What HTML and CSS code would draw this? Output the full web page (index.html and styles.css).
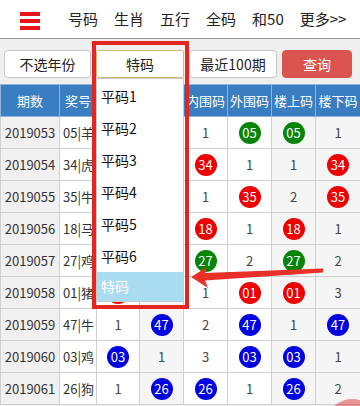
FILE: index.html
```html
<!DOCTYPE html>
<html lang="zh-CN">

<head>
    <meta charset="UTF-8">
    <meta name="viewport" content="width=device-width, initial-scale=1.0">
    <title>特码</title>
    <link rel="stylesheet" href="styles.css">
</head>

<body>
    <header class="topbar">
        <div class="menu-btn">
            <span></span>
            <span></span>
            <span></span>
        </div>
        <nav class="nav">
            <a href="#">号码</a>
            <a href="#">生肖</a>
            <a href="#">五行</a>
            <a href="#">全码</a>
            <a href="#">和50</a>
            <a href="#">更多&gt;&gt;</a>
        </nav>
    </header>

    <div class="filter">
        <button class="btn">不选年份</button>
        <div class="select-wrap">
            <div class="select">特码</div>
            <ul class="options">
                <li>平码1</li>
                <li>平码2</li>
                <li>平码3</li>
                <li>平码4</li>
                <li>平码5</li>
                <li>平码6</li>
                <li class="active">特码</li>
            </ul>
        </div>
        <button class="btn">最近100期</button>
        <button class="btn btn-query">查询</button>
    </div>

    <table class="data">
        <colgroup>
            <col style="width:59px">
            <col style="width:37px">
            <col style="width:43px">
            <col style="width:44px">
            <col style="width:44px">
            <col style="width:44px">
            <col style="width:44px">
            <col style="width:45px">
        </colgroup>
        <thead>
            <tr>
                <th>期数</th>
                <th>奖号</th>
                <th>小码</th>
                <th>大码</th>
                <th>内围码</th>
                <th>外围码</th>
                <th>楼上码</th>
                <th>楼下码</th>
            </tr>
        </thead>
        <tbody>
            <tr>
                <td>2019053</td><td>05|羊</td>
                <td><span class="ball green">05</span></td><td>1</td>
                <td>1</td><td><span class="ball green">05</span></td>
                <td><span class="ball green">05</span></td><td>1</td>
            </tr>
            <tr>
                <td>2019054</td><td>34|虎</td>
                <td>1</td><td><span class="ball red">34</span></td>
                <td><span class="ball red">34</span></td><td>1</td>
                <td>1</td><td><span class="ball red">34</span></td>
            </tr>
            <tr>
                <td>2019055</td><td>35|牛</td>
                <td>2</td><td><span class="ball red">35</span></td>
                <td>1</td><td><span class="ball red">35</span></td>
                <td>2</td><td><span class="ball red">35</span></td>
            </tr>
            <tr>
                <td>2019056</td><td>18|马</td>
                <td><span class="ball red">18</span></td><td>1</td>
                <td><span class="ball red">18</span></td><td>1</td>
                <td><span class="ball red">18</span></td><td>1</td>
            </tr>
            <tr>
                <td>2019057</td><td>27|鸡</td>
                <td>1</td><td><span class="ball green">27</span></td>
                <td><span class="ball green">27</span></td><td>2</td>
                <td><span class="ball green">27</span></td><td>2</td>
            </tr>
            <tr>
                <td>2019058</td><td>01|猪</td>
                <td><span class="ball red">01</span></td><td>1</td>
                <td>1</td><td><span class="ball red">01</span></td>
                <td><span class="ball red">01</span></td><td>3</td>
            </tr>
            <tr>
                <td>2019059</td><td>47|牛</td>
                <td>1</td><td><span class="ball blue">47</span></td>
                <td>2</td><td><span class="ball blue">47</span></td>
                <td>1</td><td><span class="ball blue">47</span></td>
            </tr>
            <tr>
                <td>2019060</td><td>03|鸡</td>
                <td><span class="ball blue">03</span></td><td>1</td>
                <td>3</td><td><span class="ball blue">03</span></td>
                <td><span class="ball blue">03</span></td><td>1</td>
            </tr>
            <tr>
                <td>2019061</td><td>26|狗</td>
                <td>1</td><td><span class="ball blue">26</span></td>
                <td><span class="ball blue">26</span></td><td>1</td>
                <td><span class="ball blue">26</span></td><td>2</td>
            </tr>
        </tbody>
    </table>

    <!-- annotation: red box round the dropdown and arrow to the selected option -->
    <svg class="marks" width="360" height="406" viewBox="0 0 360 406">
        <rect x="94" y="43" width="93" height="264" fill="none" stroke="#e4261f" stroke-width="4" />
        <polygon points="191,277 207,267 205,273 323,268.5 323,272.5 205,280.5 208,288" fill="#e83028" />
    </svg>

    <!-- back-to-top button, only its top edge shows in the viewport -->
    <div class="to-top-wrap">
        <div class="to-top"></div>
    </div>
</body>

</html>
```

FILE: styles.css
```css
* {
    box-sizing: border-box;
}

body {
    margin: 0;
    background-color: #efefef;
    font-family: "Noto Sans CJK SC", "Noto Sans", sans-serif;
    color: #333;
}

.topbar {
    height: 39px;
    background-color: #fff;
    border-bottom: 1px solid #999;
    display: flex;
    align-items: center;
}

.menu-btn {
    width: 20px;
    margin: 4px 28px 0 20px;
    display: flex;
    flex-direction: column;
    gap: 3px;
}

.menu-btn span {
    display: block;
    height: 4px;
    background-color: #e8141b;
}

.nav {
    display: flex;
    gap: 16px;
    font-size: 15px;
    line-height: 20px;
}

.nav a {
    color: #222;
    text-decoration: none;
}

.filter {
    height: 45px;
    padding: 11px 8px 0 4px;
    display: flex;
    align-items: flex-start;
    gap: 5px;
}

.btn {
    width: 88px;
    height: 28px;
    padding: 0;
    border: 1px solid #c8c8c8;
    border-radius: 4px;
    background-color: #fff;
    font-family: inherit;
    font-size: 14px;
    color: #222;
}

.filter .btn:first-child {
    width: 87px;
}

.btn-query {
    width: 70px;
    border-color: #d9534f;
    background-color: #d9534f;
    color: #fff;
}

.select-wrap {
    position: relative;
    width: 88px;
    height: 28px;
}

.select {
    height: 28px;
    border: 1px solid #d7b77c;
    border-radius: 2px;
    background-color: #fff;
    font-size: 14px;
    line-height: 26px;
    text-align: center;
    color: #222;
}

.options {
    position: absolute;
    top: 100%;
    left: 0;
    width: 88px;
    margin: 0;
    padding: 1px 0 0;
    list-style: none;
    background-color: #fff;
    border: 1px solid #c9c9c9;
    z-index: 2;
}

.options li {
    height: 32px;
    padding-left: 4px;
    font-size: 14px;
    line-height: 32px;
    color: #111;
}

.options li.active {
    height: 29px;
    line-height: 29px;
    background-color: #a9dcf1;
    color: #fff;
}

.data {
    width: 100%;
    border-collapse: collapse;
    table-layout: fixed;
    font-size: 13px;
    text-align: center;
}

.data th {
    height: 32px;
    padding: 0;
    background-color: #3b7dc1;
    border: 1px solid #8fb3da;
    color: #fff;
    font-weight: normal;
    white-space: nowrap;
    overflow: hidden;
}

.data td {
    height: 32px;
    padding: 0;
    border: 1px solid #cfcfcf;
    background-color: #fff;
    color: #444;
    white-space: nowrap;
    overflow: hidden;
}

.data td:first-child {
    background-color: #f0f0f0;
    color: #333;
}

.data td:nth-child(2) {
    text-align: left;
    padding-left: 3px;
    color: #333;
}

.data td:nth-child(4),
.data td:nth-child(7),
.data td:nth-child(8) {
    background-color: #f5f5f5;
}

.ball {
    display: inline-block;
    width: 22px;
    height: 22px;
    border-radius: 50%;
    line-height: 22px;
    font-size: 13px;
    color: #fff;
    vertical-align: middle;
}

.ball.green {
    background-color: #058405;
}

.ball.red {
    background-color: #ee0000;
}

.ball.blue {
    background-color: #0000e0;
}

.marks {
    position: absolute;
    top: 0;
    left: 0;
    pointer-events: none;
    z-index: 3;
}

.to-top-wrap {
    position: fixed;
    right: 0;
    bottom: 0;
    width: 34px;
    height: 7px;
    overflow: hidden;
    z-index: 3;
}

.to-top {
    width: 52px;
    height: 52px;
    border-radius: 50%;
    background-color: rgba(222, 70, 70, 0.55);
}
```
